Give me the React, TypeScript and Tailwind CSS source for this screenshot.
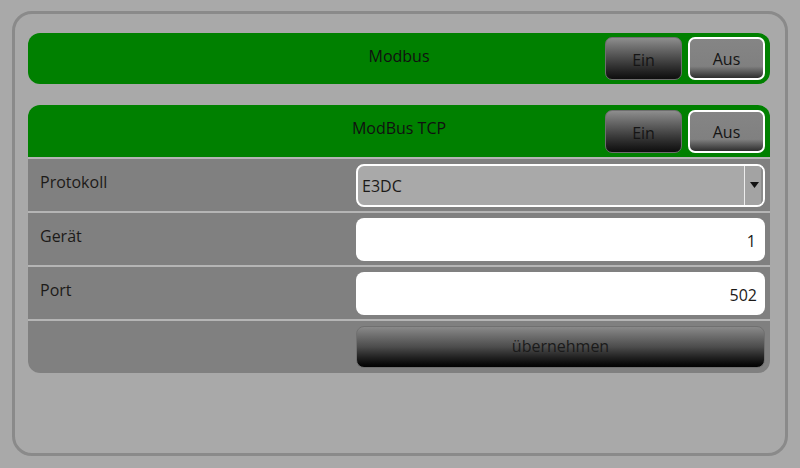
import React from 'react';

const font = { fontFamily: '"Open Sans", "DejaVu Sans", sans-serif' };

function Toggle() {
  return (
    <div className="flex items-center gap-[6px] pr-[5px]">
      <button className="w-[77px] h-[43px] rounded-[7px] border border-[#6e6e6e] bg-gradient-to-b from-[#8e8e8e] via-[#4a4a4a] to-[#0e0e0e] text-[16px] text-[#151515] pt-[3px]">
        Ein
      </button>
      <button className="w-[77px] h-[43px] rounded-[7px] border-2 border-white bg-[linear-gradient(to_bottom,#858585_0%,#808080_70%,#2e2e2e_100%)] text-[16px] text-[#151515] pt-[1px]">
        Aus
      </button>
    </div>
  );
}

function Header({ title, className }: { title: string; className: string }) {
  return (
    <div className={`grid grid-cols-[165px_1fr_165px] items-center bg-[#008000] ${className}`}>
      <div />
      <div className="text-center text-[16px] text-[#101010] pb-[6px]">{title}</div>
      <Toggle />
    </div>
  );
}

function Row({ label, children }: { label?: string; children: React.ReactNode }) {
  return (
    <div className="flex items-center h-[52px] bg-[#808080]">
      <div className="w-[328px] pl-[12px] pb-[6px] text-[16px] text-[#1c1a18]">{label}</div>
      <div className="flex-1 pr-[5px]">{children}</div>
    </div>
  );
}

export default function App() {
  return (
    <div className="w-[800px] h-[468px] bg-[#a9a9a9] pt-[11px] pl-[12px] pr-[12px]" style={font}>
      <div className="h-[445px] rounded-[20px] border-[3px] border-[#8a8a8a] pl-[13px] pr-[15px] pt-[19px]">
        <Header title="Modbus" className="h-[51px] rounded-[12px]" />

        <div className="mt-[21px] flex flex-col gap-[2px] rounded-[12px] overflow-hidden bg-[#b5b5b5]">
          <Header title="ModBus TCP" className="h-[52px]" />

          <Row label="Protokoll">
            <div className="flex items-center h-[43px] rounded-[8px] border-2 border-white bg-[#a9a9a9] overflow-hidden">
              <span className="flex-1 pl-[4px] pt-[2px] text-[16px] text-[#1c1a18]">E3DC</span>
              <div className="w-[19px] h-full flex items-center justify-center border-l border-[#ececec] bg-[#a3a3a3] shadow-[inset_-2px_0_0_#8c8c8c]">
                <svg width="9" height="6" viewBox="0 0 9 6">
                  <path d="M0 0h9L4.5 6z" fill="#111" />
                </svg>
              </div>
            </div>
          </Row>

          <Row label="Gerät">
            <div className="h-[43px] rounded-[8px] bg-white flex items-center justify-end pr-[9px] pt-[4px] text-[16px] text-[#1c1a18]">
              1
            </div>
          </Row>

          <Row label="Port">
            <div className="h-[43px] rounded-[8px] bg-white flex items-center justify-end pr-[8px] pt-[4px] text-[16px] text-[#1c1a18]">
              502
            </div>
          </Row>

          <Row>
            <button className="w-full h-[42px] rounded-[8px] border border-[#707070] bg-gradient-to-b from-[#8a8a8a] via-[#4c4c4c] to-[#030303] text-[16px] text-[#1a1a1a] pb-[2px]">
              übernehmen
            </button>
          </Row>
        </div>
      </div>
    </div>
  );
}
